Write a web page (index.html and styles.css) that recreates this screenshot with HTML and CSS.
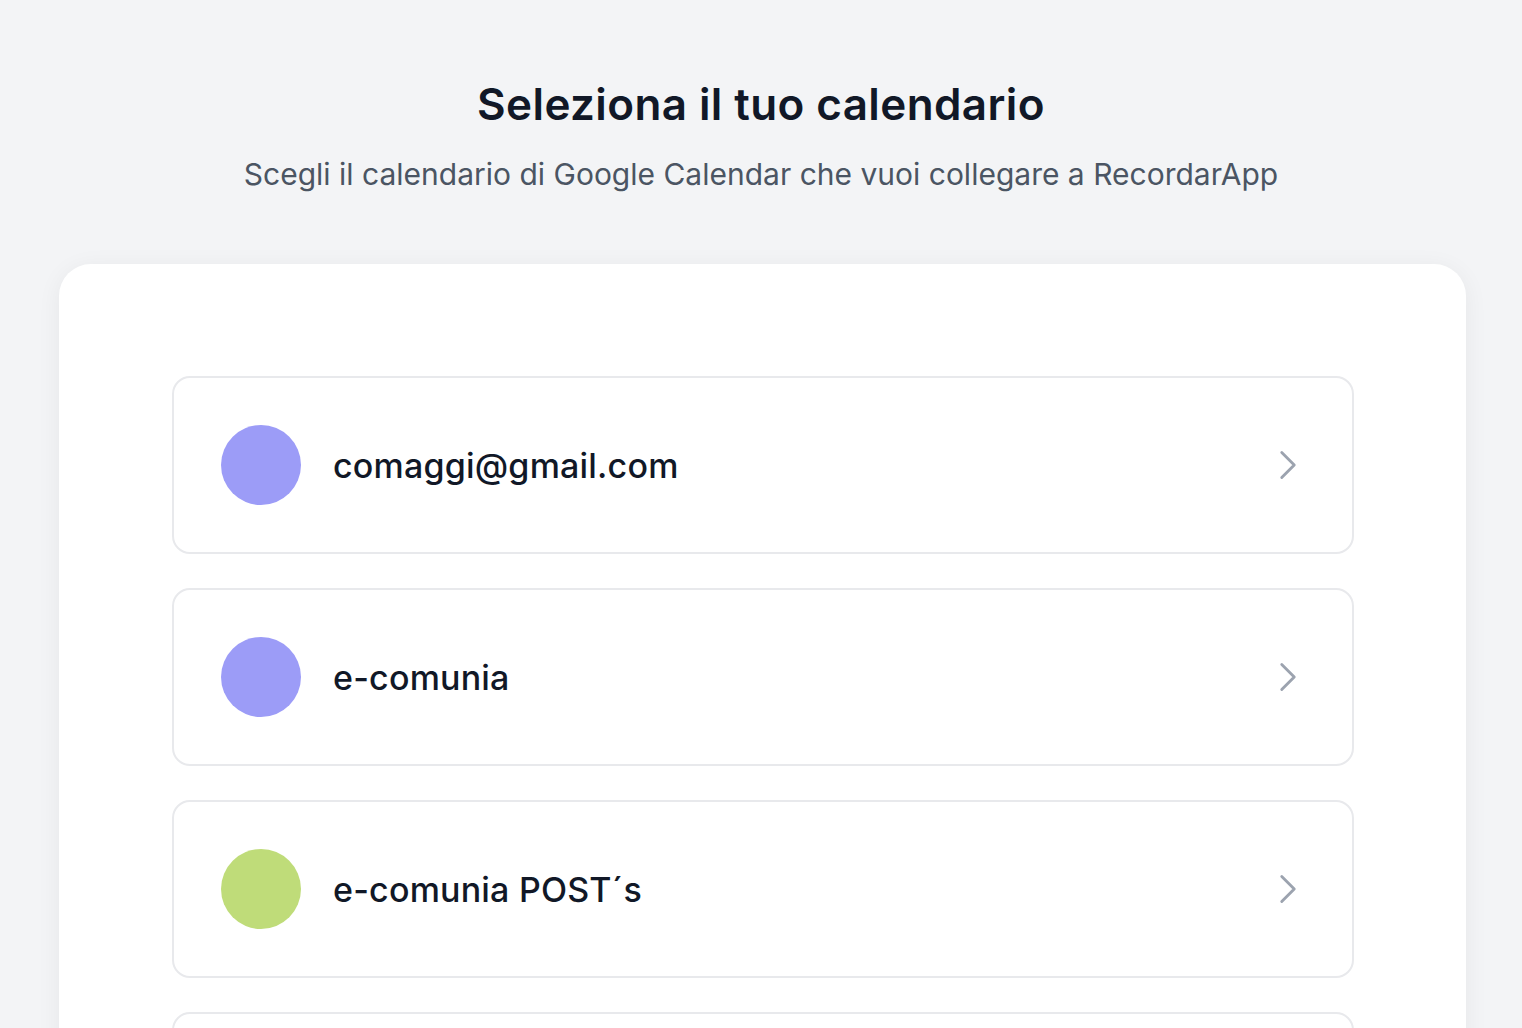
FILE: index.html
```html
<!DOCTYPE html>
<html lang="it">
<head>
  <meta charset="UTF-8" />
  <meta name="viewport" content="width=device-width, initial-scale=1.0"/>
  <title>Seleziona il tuo calendario</title>
  <link rel="stylesheet" href="styles.css">
</head>
<body>
  <div class="page">
    <header class="header">
      <h1>Seleziona il tuo calendario</h1>
      <p>Scegli il calendario di Google Calendar che vuoi collegare a RecordarApp</p>
    </header>

    <!-- Calendar list -->
    <div class="card">
      <ul class="calendar-list">
        <li class="calendar-item">
          <span class="dot dot-purple"></span>
          <span class="name">comaggi@gmail.com</span>
          <svg class="chevron" viewBox="0 0 24 24" fill="none" stroke="currentColor" stroke-width="1.7"><path stroke-linecap="round" stroke-linejoin="round" d="m8.25 4.5 7.5 7.5-7.5 7.5"/></svg>
        </li>
        <li class="calendar-item">
          <span class="dot dot-purple"></span>
          <span class="name">e-comunia</span>
          <svg class="chevron" viewBox="0 0 24 24" fill="none" stroke="currentColor" stroke-width="1.7"><path stroke-linecap="round" stroke-linejoin="round" d="m8.25 4.5 7.5 7.5-7.5 7.5"/></svg>
        </li>
        <li class="calendar-item">
          <span class="dot dot-green"></span>
          <span class="name">e-comunia POST´s</span>
          <svg class="chevron" viewBox="0 0 24 24" fill="none" stroke="currentColor" stroke-width="1.7"><path stroke-linecap="round" stroke-linejoin="round" d="m8.25 4.5 7.5 7.5-7.5 7.5"/></svg>
        </li>
        <li class="calendar-item">
          <span class="dot dot-purple"></span>
          <span class="name"></span>
          <svg class="chevron" viewBox="0 0 24 24" fill="none" stroke="currentColor" stroke-width="1.7"><path stroke-linecap="round" stroke-linejoin="round" d="m8.25 4.5 7.5 7.5-7.5 7.5"/></svg>
        </li>
      </ul>
    </div>
  </div>
</body>
</html>
```

FILE: styles.css
```css
body {
  margin: 0;
  background: #f3f4f6;
  font-family: Inter, "Noto Sans", sans-serif;
  color: #111827;
  overflow: hidden;
}

.page {
  padding: 0 56px;
}

/* Header */
.header {
  text-align: center;
  padding-top: 76px;
}

.header h1 {
  margin: 0;
  font-size: 44px;
  line-height: 56px;
  font-weight: 600;
  letter-spacing: 0.4px;
  color: #111827;
}

.header p {
  margin: 22px 0 0;
  font-size: 30px;
  line-height: 40px;
  color: #4b5563;
  letter-spacing: 0;
}

/* Card */
.card {
  margin: 70px 0 0 3px;
  width: 1407px;
  background: #fff;
  border-radius: 32px;
  box-shadow: 0 4px 24px rgba(17, 24, 39, 0.06);
  padding: 112px 112px 0 113px;
  box-sizing: border-box;
  min-height: 800px;
}

.calendar-list {
  list-style: none;
  margin: 0;
  padding: 0;
  display: flex;
  flex-direction: column;
  gap: 34px;
}

.calendar-item {
  display: flex;
  align-items: center;
  gap: 32px;
  padding: 47px;
  border: 2px solid #e8e9ec;
  border-radius: 18px;
  width: 1182px;
  box-sizing: border-box;
}

.dot {
  width: 80px;
  height: 80px;
  border-radius: 50%;
  flex-shrink: 0;
}

.dot-purple {
  background: #9c9cf7;
}

.dot-green {
  background: #bfdc79;
}

.name {
  flex: 1;
  font-size: 34px;
  font-weight: 500;
  letter-spacing: 0.2px;
  color: #111827;
}

.chevron {
  width: 40px;
  height: 40px;
  margin-right: -3px;
  color: #9ca3af;
}
```
